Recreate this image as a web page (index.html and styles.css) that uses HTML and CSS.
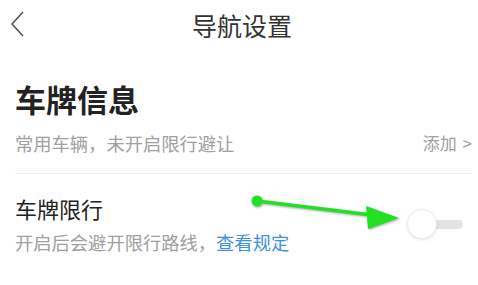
FILE: index.html
```html
<!DOCTYPE html>
<html lang="zh-CN">
<head>
    <meta charset="UTF-8">
    <meta name="viewport" content="width=device-width, initial-scale=1.0">
    <title>导航设置</title>
    <link rel="stylesheet" href="styles.css">
</head>
<body>

<div class="page">
    <div class="header">
        <svg class="back" width="14" height="26" viewBox="0 0 14 26">
            <path d="M13 1 L2 13 L13 25" fill="none" stroke="#555" stroke-width="1.6"/>
        </svg>
        <div class="header-title">导航设置</div>
    </div>

    <div class="section">
        <h1 class="section-title">车牌信息</h1>
        <div class="row-info">
            <span class="hint">常用车辆，未开启限行避让</span>
            <span class="add">添加 <span class="add-arrow">&gt;</span></span>
        </div>
    </div>

    <div class="divider"></div>

    <div class="setting">
        <div class="setting-text">
            <div class="setting-name">车牌限行</div>
            <div class="hint">开启后会避开限行路线，<span class="link">查看规定</span></div>
        </div>
        <div class="toggle">
            <div class="toggle-track"></div>
            <div class="toggle-knob"></div>
        </div>
    </div>

    <!-- 标注箭头 -->
    <svg class="annotation" width="478" height="285" viewBox="0 0 478 285">
        <g class="arrow">
            <line x1="257" y1="201" x2="372" y2="215" stroke="#22e022" stroke-width="3.5" stroke-linecap="round"/>
            <circle cx="257" cy="201" r="5.5" fill="#22e022"/>
            <polygon points="366,206 399,218 368,229" fill="#22e022"/>
        </g>
    </svg>
</div>

</body>
</html>
```

FILE: styles.css
```css
body {
    margin: 0;
    padding: 0;
    background-color: #fff;
    font-family: "Noto Sans CJK SC", "Noto Sans", sans-serif;
}
.page {
    position: relative;
    width: 478px;
    height: 285px;
    overflow: hidden;
}
.header {
    height: 50px;
    display: flex;
    align-items: center;
    justify-content: center;
    position: relative;
}
.back {
    position: absolute;
    left: 10px;
    top: 11px;
}
.header-title {
    font-size: 25px;
    line-height: 25px;
    color: #333;
    margin-left: 6px;
}
.section {
    padding: 0 6px 0 15px;
}
.section-title {
    margin: 33px 0 0 0;
    font-size: 31px;
    line-height: 31px;
    font-weight: bold;
    color: #222;
}
.row-info {
    display: flex;
    justify-content: space-between;
    align-items: center;
    margin-top: 20px;
}
.hint {
    font-size: 18.3px;
    line-height: 18px;
    color: #a0a0a0;
}
.add {
    font-size: 17px;
    line-height: 18px;
    color: #a0a0a0;
}
.add-arrow {
    margin-left: 2px;
}
.divider {
    height: 1px;
    background-color: #eee;
    margin: 21px 6px 0 15px;
}
.setting {
    display: flex;
    justify-content: space-between;
    align-items: center;
    padding: 23px 15px 0 15px;
}
.setting-name {
    font-size: 22px;
    line-height: 22px;
    color: #222;
    margin-bottom: 14px;
}
.link {
    color: #3d8fe0;
}
.toggle {
    position: relative;
    width: 56px;
    height: 30px;
    display: flex;
    align-items: center;
}
.toggle-track {
    margin-left: 15px;
    width: 41px;
    height: 9px;
    border-radius: 5px;
    background-color: #e3e3e3;
}
.toggle-knob {
    position: absolute;
    left: 0;
    top: 0;
    width: 28px;
    height: 28px;
    border-radius: 50%;
    background-color: #fff;
    border: 1px solid #eee;
    box-shadow: 0 1px 3px rgba(0, 0, 0, 0.12);
}
.annotation {
    position: absolute;
    left: 0;
    top: 0;
    pointer-events: none;
}
.arrow {
    filter: drop-shadow(1px 1px 1px rgba(0, 0, 0, 0.35));
}
```
